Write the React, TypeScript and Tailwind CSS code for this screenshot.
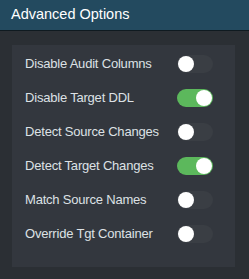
import { useState } from "react";

const OPTIONS = [
  { label: "Disable Audit Columns", on: false },
  { label: "Disable Target DDL", on: true },
  { label: "Detect Source Changes", on: false },
  { label: "Detect Target Changes", on: true },
  { label: "Match Source Names", on: false },
  { label: "Override Tgt Container", on: false },
];

function Toggle({ on, onClick }: { on: boolean; onClick: () => void }) {
  return (
    <button
      type="button"
      onClick={onClick}
      className={`flex h-[18px] w-[36px] items-center rounded-full p-px ${on ? "justify-end bg-[#5cb85c]" : "justify-start bg-[#3a3e44]"}`}
    >
      <span className="h-4 w-4 rounded-full bg-white" />
    </button>
  );
}

export default function App() {
  const [values, setValues] = useState(OPTIONS.map((o) => o.on));

  return (
    <div className="flex h-[279px] w-[249px] flex-col bg-[#2b2f34] font-['Liberation_Sans',Arial,sans-serif]">
      <div className="flex h-[31px] shrink-0 items-center border-b border-[#0f1a20] bg-[#234a5f] px-[11px] text-[14.5px] text-white">
        Advanced Options
      </div>
      <div className="pl-3 pr-[14px] pt-[14px]">
        <div className="flex flex-col gap-4 bg-[#33373e] pb-6 pl-[13px] pt-[10px]">
          {OPTIONS.map((o, i) => (
            <div key={o.label} className="flex h-[18px] items-center">
              <span className="w-[152px] text-[13px] leading-[18px] tracking-[-0.2px] text-[#dde1e5]">{o.label}</span>
              <Toggle
                on={values[i]}
                onClick={() => setValues((v) => v.map((x, j) => (j === i ? !x : x)))}
              />
            </div>
          ))}
        </div>
      </div>
    </div>
  );
}
